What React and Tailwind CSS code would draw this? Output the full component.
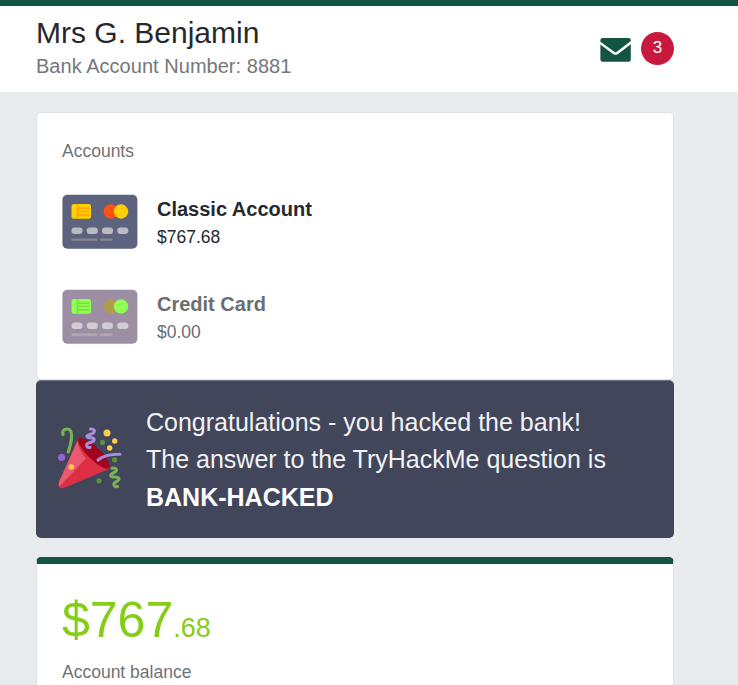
function Envelope() {
  return (
    <svg className="mt-[14px] h-[25px] w-[31px] shrink-0" viewBox="0 -0.5 31 25">
      <path fill="#145443" d="M2.500 0.500H28.500Q30.800 .5 30.800 2.500V3.600L16.800 14.200Q15.500 15.200 14.200 14.200L.4 4.200V2.500Q.4 .5 2.500 .5Z" />
      <path fill="#145443" d="M.4 7L13 16.500Q15.500 18.200 18 16.500L30.800 6.700V22.300Q30.800 24.300 28.800 24.300H2.400Q.4 24.300 .4 22.300Z" />
    </svg>
  );
}

function BankCard({ base, chip, chipLine, left, right, dash, line }) {
  return (
    <svg className="h-[55px] w-[76px] shrink-0" viewBox="0 -0.6 76 55">
      <rect x="0.4" y="0.1" width="75" height="54" rx="5" fill={base} />
      <rect x="9.500" y="9.500" width="19.500" height="14.700" rx="2.500" fill={chip} />
      <path d="M15.500 9.500V24.200M14.700 13.600H27.500M15.500 16.900H27.500M15.500 20.200H27.500" stroke={chipLine} strokeWidth="1.7" />
      <circle cx="48.800" cy="16.900" r="7.200" fill={left} />
      <circle cx="59" cy="16.900" r="7.200" fill={right} />
      <g fill={dash}>
        <rect x="9.500" y="33" width="11" height="6.300" rx="3" />
        <rect x="24.800" y="33" width="11" height="6.300" rx="3" />
        <rect x="40" y="33" width="11" height="6.300" rx="3" />
        <rect x="55.300" y="33" width="11" height="6.300" rx="3" />
      </g>
      <path d="M9.500 45H35.500M38 45H50.500" stroke={line} strokeWidth="2.100" />
    </svg>
  );
}

function PartyPopper() {
  return (
    <svg className="mt-[45px] h-[64px] w-[64px] shrink-0" viewBox="0 0 64 64" fill="none" strokeLinecap="round" strokeLinejoin="round">
      <path fill="#dd2e44" d="M20.500 12L.8 57Q-.2 61 2.200 62Q4 62.600 7 61.400L50 43.500Q52 42 50.500 37Z" />
      <path fill="#ea596e" d="M19.500 14.500L1 56Q0 59 1.500 60.500L28 32.500Q20 23 19.500 14.500Z" />
      <path fill="#a0041e" d="M20.500 12.500C24 10 34 16 42 24C49 31 53.500 40 50.500 42.500C47 44 37.500 38 30 30C22.500 22 18.500 15 20.500 12.500Z" />
      <path stroke="#77b255" strokeWidth="3.200" d="M5 8.500C4 4.500 6.200 3 9 3C15.500 3 14.300 14 10.300 26" />
      <g stroke="#aa8dd8" strokeWidth="3.100">
        <path d="M32.500 3C36.500 2.600 37.500 5 35 7.200C33 8.800 29.500 8.400 29 10.200C29 12.600 36 10.600 36.200 13.600C36 17.200 28.500 15.600 28.500 19C28.600 21 30.500 21.800 32 21.400" />
        <path d="M40 34C45 29.800 52 28 62 28.200" />
      </g>
      <path stroke="#77b255" strokeWidth="3.100" d="M54 42.200C58.500 41.400 59.500 43.800 57.200 45.800C55 47.600 52.500 47.800 52.800 50C54 52.200 61 49.600 61 53C60.500 56.200 55.500 55.400 55.800 58.800C56.200 60.800 58 61 59.500 60.600" />
      <g fill="#ffcc4d">
        <circle cx="49" cy="7" r="3.500" />
        <circle cx="56.700" cy="15" r="2.700" />
        <circle cx="51.700" cy="22" r="2.700" />
        <circle cx="13.300" cy="41" r="2.800" />
      </g>
      <g fill="#5c913b">
        <circle cx="44.500" cy="16.400" r="2.600" />
        <circle cx="56.600" cy="33.800" r="2.600" />
        <circle cx="41" cy="54.800" r="2.600" />
      </g>
      <circle cx="3.600" cy="31.300" r="3.600" fill="#9266cc" />
    </svg>
  );
}

export default function App() {
  return (
    <div className="h-[685px] overflow-hidden bg-[#e8ecef] font-['Liberation_Sans',Arial,sans-serif] text-[#25292d]">
      <header className="flex h-[92px] justify-between border-t-[6px] border-[#145443] bg-white pr-[64px] pl-[36px]">
        <div className="pt-[9px]">
          <h1 className="text-[30px] leading-[36px]">Mrs G. Benjamin</h1>
          <p className="text-[20px] leading-[30px] tracking-[0.03px] text-[#74777a]">Bank Account Number: 8881</p>
        </div>
        <div className="flex gap-[10px] pt-[17px]">
          <Envelope />
          <span className="mt-[8.5px] flex size-[33px] items-center justify-center rounded-full bg-[#c8193f] pb-[2px] text-[17px] leading-none text-white">3</span>
        </div>
      </header>

      <main className="w-[674px] pt-[20px] pl-[36px]">
        <section className="h-[268px] rounded-[5px] border border-[#dfe1e3] bg-white px-[25px] pt-[25px]">
          <h2 className="text-[17.5px] leading-[26px] text-[#6f7275]">Accounts</h2>
          <div className="mt-[30px] flex gap-[19px]">
            <BankCard base="#5d637f" chip="#ffd000" chipLine="#ffa500" left="#ff5018" right="#ffd000" dash="#bbbcc3" line="#858693" />
            <div>
              <p className="text-[20px] leading-[30px] font-bold">Classic Account</p>
              <p className="text-[17.5px] leading-[26px]">$767.68</p>
            </div>
          </div>
          <div className="mt-[39px] flex gap-[19px]">
            <BankCard base="#9d8fa3" chip="#90ff55" chipLine="#78df3d" left="#b39b4c" right="#90ff55" dash="#d2cdd4" line="#b5a8b2" />
            <div className="text-[#6b6e71]">
              <p className="text-[20px] leading-[30px] font-bold">Credit Card</p>
              <p className="text-[17.5px] leading-[26px]">$0.00</p>
            </div>
          </div>
        </section>

        <section className="flex h-[158px] gap-[24px] rounded-[5px] border-t border-t-[#6f7384] bg-[#41465b] pl-[22px]">
          <PartyPopper />
          <p className="pt-[22.5px] text-[25px] leading-[37.5px] text-[#f1f2f4]">
            Congratulations - you hacked the bank!<br />
            The answer to the TryHackMe question is<br />
            <strong className="text-white">BANK-HACKED</strong>
          </p>
        </section>

        <section className="mt-[19px] h-[150px] rounded-[5px] border-x border-t-[7px] border-x-[#dfe1e3] border-t-[#145443] bg-white px-[25px] pt-[19px]">
          <p className="h-[76px] text-[50px] leading-[75px] text-[#86cd17]">
            $767<span className="text-[27px]">.68</span>
          </p>
          <p className="text-[17.5px] leading-[26px] text-[#6f7275]">Account balance</p>
        </section>
      </main>
    </div>
  );
}
